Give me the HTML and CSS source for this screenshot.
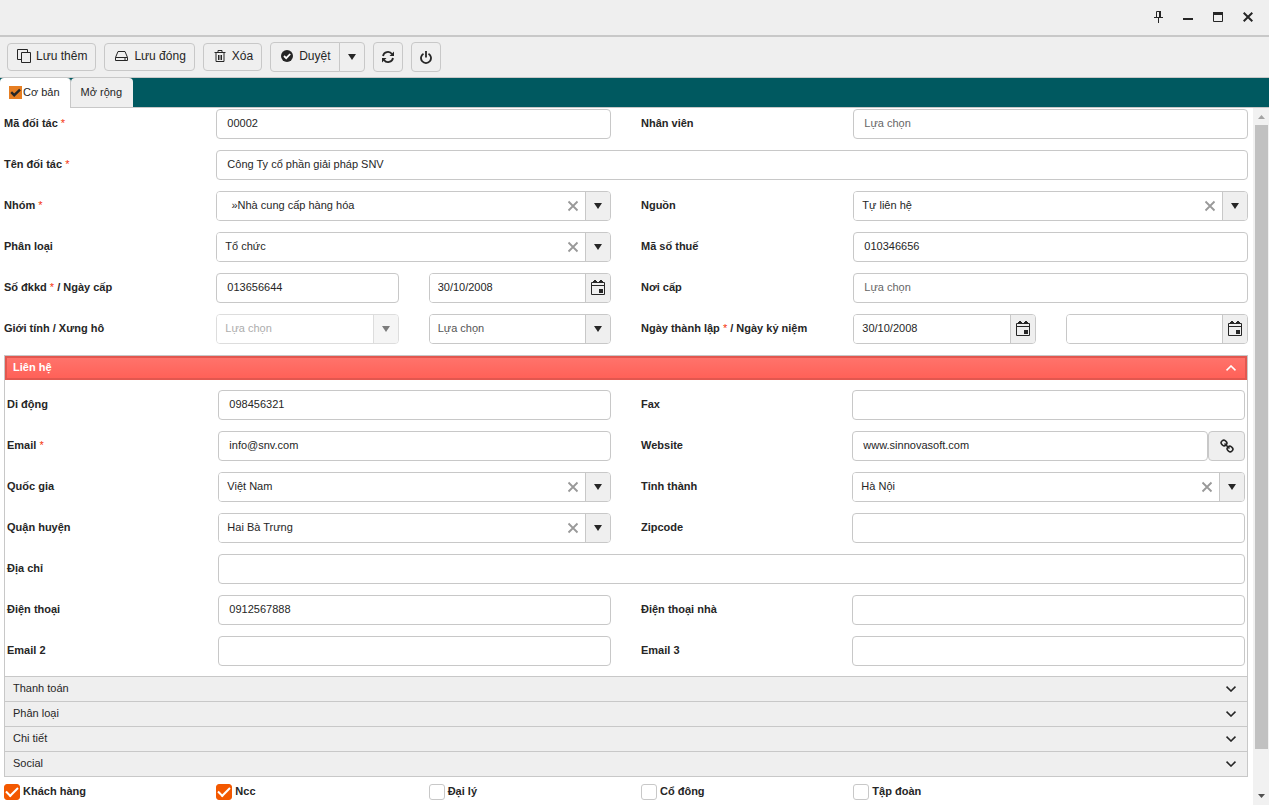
FILE: index.html
```html
<!DOCTYPE html>
<html lang="vi">
<head>
<meta charset="utf-8">
<title>Đối tác</title>
<link rel="stylesheet" href="styles.css">
</head>
<body>
<svg class="defs" aria-hidden="true">
  <symbol id="x" viewBox="0 0 12 12"><path d="M1.500 1.500l9 9M10.500 1.500l-9 9" fill="none" stroke="currentColor" stroke-width="1.800"/></symbol>
  <symbol id="caret" viewBox="0 0 8 6"><path d="M0 0h8L4 6z" fill="currentColor"/></symbol>
  <symbol id="down" viewBox="0 0 10 6"><path d="M.5.7L5 5 9.500.7" fill="none" stroke="currentColor" stroke-width="1.600"/></symbol>
  <symbol id="cal" viewBox="0 0 14 16"><path d="M.5 2.500h13v12H.5zM.5 5.500h13" fill="none" stroke="currentColor"/><path d="M2 1.500h4M8 1.500h4" stroke="currentColor"/><path d="M3 0h2v3H3zM9 0h2v3H9zM8 9h4v4H8z" fill="currentColor"/></symbol>
</svg>

<header class="titlebar">
  <button type="button" aria-label="Ghim"><svg width="9" height="12" viewBox="0 0 9 12"><path d="M2.500 6.500v-6h4v6M0 6.500h9M4.500 7v5" fill="none" stroke="currentColor"/><path d="M5 0h2v7H5z" fill="currentColor"/></svg></button>
  <button type="button" aria-label="Thu nhỏ"><svg width="10" height="12" viewBox="0 0 10 12"><path d="M0 7h10v2H0z" fill="currentColor"/></svg></button>
  <button type="button" aria-label="Phóng to"><svg width="10" height="10" viewBox="0 0 10 10"><path d="M.5.5h9v9h-9z" fill="none" stroke="currentColor"/><path d="M0 0h10v3H0z" fill="currentColor"/></svg></button>
  <button type="button" aria-label="Đóng"><svg width="10" height="10" viewBox="0 0 10 10"><path d="M.7.7l8.600 8.600M9.300.7L.7 9.300" stroke="currentColor" stroke-width="2"/></svg></button>
</header>

<div class="toolbar">
  <button type="button" class="btn add"><svg width="14" height="14" viewBox="0 0 14 14" fill="none" stroke="currentColor"><path d="M4.500 3.500h9v10h-9zM4 10.500H.5V.5h10v3"/></svg>Lưu thêm</button>
  <button type="button" class="btn"><svg width="13" height="12" viewBox="0 0 13 12" fill="none" stroke="currentColor"><path d="M.5 7.500L3 1.500h7l2.500 6v3H.5zM.5 7.500h12M9 9h2"/></svg>Lưu đóng</button>
  <button type="button" class="btn"><svg width="12" height="12" viewBox="0 0 12 12" fill="none" stroke="currentColor"><path d="M.5 2.500h11M4 2.500v-2h4v2M2 3v8.500h8V3M4.500 5v5M6 5v5M7.500 5v5"/></svg>Xóa</button>
  <div class="split">
    <button type="button" class="btn tall"><svg width="12" height="12" viewBox="0 0 12 12"><circle cx="6" cy="6" r="6" fill="currentColor"/><path d="M3 6l2.200 2.200L9.200 4" fill="none" stroke="#fff" stroke-width="1.800"/></svg>Duyệt</button>
    <button type="button" class="btn tall more" aria-label="Thêm lựa chọn"><svg width="8" height="6"><use href="#caret"/></svg></button>
  </div>
  <button type="button" class="btn tall square" aria-label="Tải lại"><svg width="14" height="14" viewBox="0 0 14 14"><path d="M2 6a5 5 0 0 1 9-2M12 8a5 5 0 0 1-9 2" fill="none" stroke="currentColor" stroke-width="1.800"/><path d="M13 1.500v4.500H8.500zM1 12.500V8h4.500z" fill="currentColor"/></svg></button>
  <button type="button" class="btn tall square" aria-label="Thoát"><svg width="12" height="13" viewBox="0 0 12 13" fill="none" stroke="currentColor" stroke-width="1.800"><path d="M3.500 2.700a5 5 0 1 0 5 0M6 0v6.500"/></svg></button>
</div>

<nav class="tabs" role="tablist">
  <button type="button" class="tab active" role="tab" aria-selected="true"><svg width="13" height="13" viewBox="0 0 13 13"><path d="M0 0h13v13H0z" fill="#e67e22"/><path d="M2.200 6.200l3 3L11 3.600" fill="none" stroke="#262626" stroke-width="2.400"/></svg>Cơ bản</button>
  <button type="button" class="tab" role="tab" aria-selected="false">Mở rộng</button>
</nav>

<div class="view">
<main class="content">
  <form class="form">
    <div class="grid">
      <label for="ma">Mã đối tác <i>*</i></label>
      <input class="box w2" id="ma" value="00002">
      <label for="nv">Nhân viên</label>
      <input class="box w2" id="nv" placeholder="Lựa chọn">

      <label for="ten">Tên đối tác <i>*</i></label>
      <input class="box w5" id="ten" value="Công Ty cổ phần giải pháp SNV">

      <label for="nhom">Nhóm <i>*</i></label>
      <div class="box combo w2"><select id="nhom"><option>&nbsp;&nbsp;»Nhà cung cấp hàng hóa</option></select><button type="button" class="clear" aria-label="Xóa"><svg width="12" height="12"><use href="#x"/></svg></button><span class="pick"><svg width="8" height="6"><use href="#caret"/></svg></span></div>
      <label for="nguon">Nguồn</label>
      <div class="box combo w2"><select id="nguon"><option>Tự liên hệ</option></select><button type="button" class="clear" aria-label="Xóa"><svg width="12" height="12"><use href="#x"/></svg></button><span class="pick"><svg width="8" height="6"><use href="#caret"/></svg></span></div>

      <label for="loai">Phân loại</label>
      <div class="box combo w2"><select id="loai"><option>Tổ chức</option></select><button type="button" class="clear" aria-label="Xóa"><svg width="12" height="12"><use href="#x"/></svg></button><span class="pick"><svg width="8" height="6"><use href="#caret"/></svg></span></div>
      <label for="mst">Mã số thuế</label>
      <input class="box w2" id="mst" value="010346656">

      <label for="dkkd">Số đkkd <i>*</i> / Ngày cấp</label>
      <input class="box" id="dkkd" value="013656644">
      <div class="box combo"><input aria-label="Ngày cấp" value="30/10/2008"><button type="button" class="pick" aria-label="Chọn ngày"><svg width="14" height="16"><use href="#cal"/></svg></button></div>
      <label for="noi">Nơi cấp</label>
      <input class="box w2" id="noi" placeholder="Lựa chọn">

      <label for="gt">Giới tính / Xưng hô</label>
      <div class="box combo off"><select id="gt" disabled><option>Lựa chọn</option></select><span class="pick"><svg width="8" height="6"><use href="#caret"/></svg></span></div>
      <div class="box combo empty"><select aria-label="Xưng hô"><option>Lựa chọn</option></select><span class="pick"><svg width="8" height="6"><use href="#caret"/></svg></span></div>
      <label for="ntl">Ngày thành lập <i>*</i> / Ngày kỷ niệm</label>
      <div class="box combo"><input id="ntl" value="30/10/2008"><button type="button" class="pick" aria-label="Chọn ngày"><svg width="14" height="16"><use href="#cal"/></svg></button></div>
      <div class="box combo"><input aria-label="Ngày kỷ niệm"><button type="button" class="pick" aria-label="Chọn ngày"><svg width="14" height="16"><use href="#cal"/></svg></button></div>
    </div>

    <section class="accordion">
      <button type="button" class="head open" aria-expanded="true">Liên hệ<svg class="up" width="10" height="6"><use href="#down"/></svg></button>
      <div class="grid panel">
        <label for="dd">Di động</label>
        <input class="box w2" id="dd" value="098456321">
        <label for="fax">Fax</label>
        <input class="box w2" id="fax">

        <label for="em">Email <i>*</i></label>
        <input class="box w2" id="em" value="info@snv.com">
        <label for="web">Website</label>
        <div class="site w2"><input class="box" id="web" value="www.sinnovasoft.com"><button type="button" class="box link" aria-label="Mở liên kết"><svg width="14" height="14" viewBox="0 0 14 14" fill="none" stroke="currentColor" stroke-width="1.600"><rect x="-2.800" y="-2.500" width="5.600" height="5" rx="2.200" transform="translate(4 4) rotate(45)"/><rect x="-2.800" y="-2.500" width="5.600" height="5" rx="2.200" transform="translate(10 10) rotate(45)"/><path d="M4.500 4.500l5 5"/></svg></button></div>

        <label for="qg">Quốc gia</label>
        <div class="box combo w2"><select id="qg"><option>Việt Nam</option></select><button type="button" class="clear" aria-label="Xóa"><svg width="12" height="12"><use href="#x"/></svg></button><span class="pick"><svg width="8" height="6"><use href="#caret"/></svg></span></div>
        <label for="tt">Tỉnh thành</label>
        <div class="box combo w2"><select id="tt"><option>Hà Nội</option></select><button type="button" class="clear" aria-label="Xóa"><svg width="12" height="12"><use href="#x"/></svg></button><span class="pick"><svg width="8" height="6"><use href="#caret"/></svg></span></div>

        <label for="qh">Quận huyện</label>
        <div class="box combo w2"><select id="qh"><option>Hai Bà Trưng</option></select><button type="button" class="clear" aria-label="Xóa"><svg width="12" height="12"><use href="#x"/></svg></button><span class="pick"><svg width="8" height="6"><use href="#caret"/></svg></span></div>
        <label for="zip">Zipcode</label>
        <input class="box w2" id="zip">

        <label for="dc">Địa chỉ</label>
        <input class="box w5" id="dc">

        <label for="dt">Điện thoại</label>
        <input class="box w2" id="dt" value="0912567888">
        <label for="dtn">Điện thoại nhà</label>
        <input class="box w2" id="dtn">

        <label for="em2">Email 2</label>
        <input class="box w2" id="em2">
        <label for="em3">Email 3</label>
        <input class="box w2" id="em3">
      </div>
      <button type="button" class="head" aria-expanded="false">Thanh toán<svg width="10" height="6"><use href="#down"/></svg></button>
      <button type="button" class="head" aria-expanded="false">Phân loại<svg width="10" height="6"><use href="#down"/></svg></button>
      <button type="button" class="head" aria-expanded="false">Chi tiết<svg width="10" height="6"><use href="#down"/></svg></button>
      <button type="button" class="head" aria-expanded="false">Social<svg width="10" height="6"><use href="#down"/></svg></button>
    </section>

    <div class="grid checks">
      <label><input type="checkbox" checked><span>Khách hàng</span></label>
      <label><input type="checkbox" checked><span>Ncc</span></label>
      <label><input type="checkbox"><span>Đại lý</span></label>
      <label><input type="checkbox"><span>Cổ đông</span></label>
      <label><input type="checkbox"><span>Tập đoàn</span></label>
    </div>
  </form>
</main>
<div class="scrollbar" aria-hidden="true">
  <svg class="faint" width="7" height="4" viewBox="0 0 7 4"><path d="M0 4h7L3.500 0z" fill="currentColor"/></svg>
  <div class="thumb"></div>
  <svg width="7" height="4" viewBox="0 0 7 4"><path d="M0 0h7L3.500 4z" fill="currentColor"/></svg>
</div>
</div>
</body>
</html>
```

FILE: styles.css
```css
* {
  box-sizing: border-box;
}

body {
  margin: 0;
  height: 100vh;
  display: flex;
  flex-direction: column;
  overflow: hidden;
  background: #fff;
  color: #262626;
  font: 11px/14px "Liberation Sans", Arial, sans-serif;
}

button,
input,
select {
  margin: 0;
  font: inherit;
  color: inherit;
}

button {
  padding: 0;
  border: 0;
  background: none;
}

svg {
  flex: none;
  display: block;
}

.defs {
  position: absolute;
  width: 0;
  height: 0;
}

.titlebar {
  flex: none;
  height: 37px;
  padding: 0 6px 2px;
  display: flex;
  justify-content: flex-end;
  align-items: center;
  background: #efefef;
  border-bottom: 2px solid #c8c8c8;
}

.titlebar button {
  width: 30px;
  height: 30px;
  display: flex;
  align-items: center;
  justify-content: center;
}

.toolbar {
  flex: none;
  height: 41px;
  padding: 0 7px;
  display: flex;
  align-items: center;
  gap: 8px;
  background: #efefef;
  border-bottom: 1px solid #c8c8c8;
}

.btn {
  height: 28px;
  padding: 0 8px 2px 10px;
  display: flex;
  align-items: center;
  gap: 6px;
  border: 1px solid #c8c8c8;
  border-radius: 4px;
  background: #efefef;
  font-size: 12px;
}

.btn.add {
  padding-left: 9px;
  gap: 5px;
}

.tall {
  height: 30px;
}

.split {
  display: flex;
}

.split .btn:first-child {
  border-radius: 4px 0 0 4px;
}

.split .more {
  width: 26px;
  margin-left: -1px;
  padding: 0;
  justify-content: center;
  border-radius: 0 4px 4px 0;
}

.btn.square {
  width: 30px;
  padding: 0;
  justify-content: center;
}

.tabs {
  flex: none;
  height: 30px;
  display: flex;
  background: #005960;
  border-bottom: 1px solid #c8c8c8;
}

.tab {
  height: 29px;
  padding: 0 11px 1px 10px;
  display: flex;
  align-items: center;
  gap: 1px;
  background: #efefef;
  border-radius: 4px 4px 0 0;
}

.tab.active {
  height: 30px;
  padding: 0 10px 2px 9px;
  border-right: 1px solid #c8c8c8;
  background: #fff;
}

.view {
  flex: 1;
  min-height: 0;
  display: flex;
}

.content {
  flex: 1;
  min-width: 0;
  overflow: hidden;
  padding: 1px 5px 4px 4px;
}

.grid {
  display: grid;
  grid-template-columns: repeat(6, minmax(0, 1fr));
  gap: 11px 30px;
  align-items: center;
}

.grid label {
  padding-bottom: 2px;
  font-weight: bold;
  white-space: nowrap;
}

.grid i {
  color: #f5330b;
  font-style: normal;
  font-weight: normal;
}

.w2 {
  grid-column: span 2;
}

.w5 {
  grid-column: span 5;
}

.box {
  width: 100%;
  height: 30px;
  padding: 0 10px 2px;
  border: 1px solid #c8c8c8;
  border-radius: 4px;
  background: #fff;
}

.box::placeholder {
  color: #666;
  opacity: 1;
}

.combo {
  display: flex;
  padding: 0;
  overflow: hidden;
}

.combo select,
.combo input {
  flex: 1;
  min-width: 0;
  padding: 0 8px 2px;
  border: 0;
  background: #fff;
  appearance: none;
  opacity: 1;
}

.empty select {
  color: #555;
}

.off {
  opacity: 0.6;
}

.off select {
  color: #757575;
}

.clear {
  width: 24px;
  display: flex;
  align-items: center;
  justify-content: center;
  color: #999;
}

.pick {
  width: 25px;
  padding-bottom: 1px;
  display: flex;
  align-items: center;
  justify-content: center;
  border-left: 1px solid #c8c8c8;
  background: #efefef;
}

.site {
  display: flex;
}

.site input {
  flex: 1;
  min-width: 0;
}

.box.link {
  width: 37px;
  padding: 0;
  display: flex;
  align-items: center;
  justify-content: center;
  background: #efefef;
}

.accordion {
  margin-top: 11px;
  border: 1px solid #c8c8c8;
}

.head {
  width: 100%;
  height: 25px;
  padding: 0 11px 2px 8px;
  display: flex;
  align-items: center;
  justify-content: space-between;
  background: #efefef;
  border-top: 1px solid #c8c8c8;
}

.head svg {
  margin-top: 2px;
}

.head.open {
  height: 24px;
  padding: 0 9px 2px 6px;
  border: 2px solid #e2574f;
  background: linear-gradient(#ff736b, #ff6158);
  color: #fff;
  font-weight: bold;
}

.up {
  transform: rotate(180deg);
}

.panel {
  padding: 10px 2px 10px;
}

.checks {
  padding-top: 7px;
}

.checks label {
  padding: 0;
  display: flex;
  align-items: center;
  gap: 3px;
}

.checks span {
  padding-bottom: 2px;
}

.checks input {
  appearance: none;
  width: 16px;
  height: 16px;
  border: 1px solid #c8c8c8;
  border-radius: 3px;
  display: grid;
  place-items: center;
}

.checks input:checked {
  border-color: #f35800;
  background: #f35800;
}

.checks input:checked::after {
  content: "";
  width: 10px;
  height: 5px;
  margin-bottom: 3px;
  border: solid #fff;
  border-width: 0 0 2px 2px;
  transform: rotate(-45deg);
}

.scrollbar {
  flex: none;
  width: 16px;
  padding: 7px 0;
  display: flex;
  flex-direction: column;
  align-items: center;
  background: #f1f1f1;
  color: #505050;
}

.scrollbar .faint {
  color: #a3a3a3;
}

.thumb {
  flex: 1;
  width: 13px;
  margin: 6px 0 45px;
  background: #c1c1c1;
}
```
